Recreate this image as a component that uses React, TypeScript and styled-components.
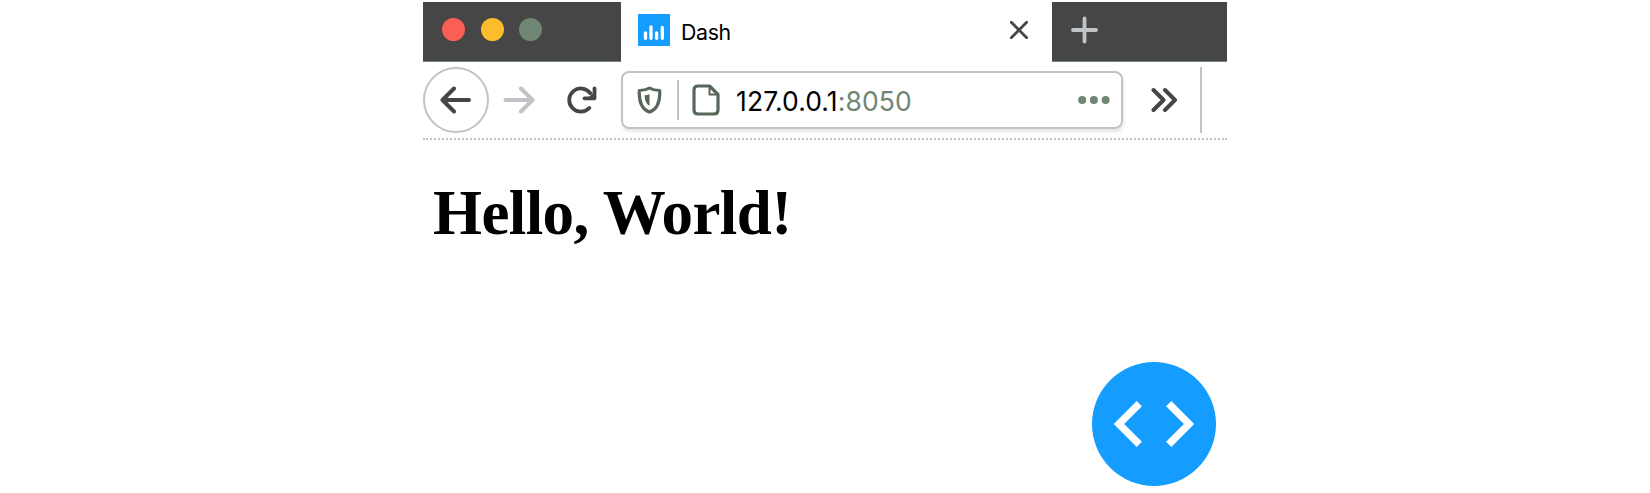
import React from "react";
import styled, { createGlobalStyle } from "styled-components";

const GlobalStyle = createGlobalStyle`
  * { box-sizing: border-box; }
  body { margin: 0; background: #fff; }
`;

const ui = `Inter, "Liberation Sans", sans-serif`;
const dark = "#464646";
const green = "#6f8672";
const grey = "#c0c4c8";
const blue = "#149dff";

const Page = styled.div`
  height: 493px;
  display: flex;
  justify-content: center;
  background: #fff;
`;
const Window = styled.div`
  width: 804px;
  padding-top: 2px;
  display: flex;
  flex-direction: column;
`;
const TabStrip = styled.div`
  height: 60px;
  display: flex;
`;
const StripSide = styled.div<{ $width: number; $pad: number }>`
  width: ${(p) => p.$width}px;
  padding-left: ${(p) => p.$pad}px;
  padding-bottom: 4px;
  display: flex;
  align-items: center;
  gap: 15.5px;
  background: ${dark};
  border-bottom: 1px solid ${green};
`;
const Light = styled.span<{ $color: string }>`
  width: 23px;
  height: 23px;
  border-radius: 50%;
  background: ${(p) => p.$color};
`;
const Tab = styled.div`
  width: 431px;
  padding: 0 24px 4px 17px;
  display: flex;
  align-items: center;
`;
const TabTitle = styled.span`
  flex: 1;
  margin-left: 11px;
  padding-top: 3px;
  font: 400 21.3px/28px ${ui};
  letter-spacing: -0.35px;
  color: #000;
`;
const Toolbar = styled.div`
  height: 78px;
  padding: 5px 0 6px;
  display: flex;
  align-items: center;
  border-bottom: 2px dotted ${grey};
`;
const BackButton = styled.div`
  width: 66px;
  height: 66px;
  border: 2px solid ${grey};
  border-radius: 50%;
  display: flex;
  align-items: center;
  justify-content: center;
`;
const NavIcon = styled.div<{ $left: number }>`
  display: flex;
  margin-left: ${(p) => p.$left}px;
`;
const AddressBar = styled.div`
  width: 502px;
  height: 58px;
  margin-left: 24px;
  padding: 0 11px 0 14px;
  display: flex;
  align-items: center;
  border: 2px solid ${grey};
  border-radius: 8px;
  box-shadow: 1px 3px 3px rgba(120, 125, 130, 0.18);
`;
const Divider = styled.span<{ $height: number; $left: number; $right?: number }>`
  width: 2px;
  height: ${(p) => p.$height}px;
  margin: 0 ${(p) => p.$right ?? 0}px 0 ${(p) => p.$left}px;
  background: ${grey};
`;
const Url = styled.span`
  flex: 1;
  margin-left: 16px;
  padding-top: 2px;
  font: 400 26.5px/36px ${ui};
  letter-spacing: 0.1px;
  color: #000;
`;
const Port = styled.span`
  color: ${green};
`;
const Content = styled.main`
  flex: 1;
  padding: 36px 11px 7px 10px;
  display: flex;
  flex-direction: column;
  justify-content: space-between;
`;
const Heading = styled.h1`
  margin: 0;
  font: 700 63px/74px "Liberation Serif", serif;
  letter-spacing: -0.6px;
  color: #000;
`;
const DebugButton = styled.div`
  align-self: flex-end;
  width: 124px;
  height: 124px;
  border-radius: 50%;
  background: ${blue};
  display: flex;
`;

const Arrow = ({ color, flip }: { color: string; flip?: boolean }) => (
  <svg width="32" height="28" viewBox="0 0 32 28" fill="none" stroke={color} strokeWidth="4" strokeLinecap="round" strokeLinejoin="round">
    <path d={flip ? "M2.5 14H29M18 2.5L29.5 14L18 25.5" : "M29 14H3M14 2.5L2.5 14L14 25.5"} />
  </svg>
);

export default function App() {
  return (
    <Page>
      <GlobalStyle />
      <Window>
        <TabStrip>
          <StripSide $width={198} $pad={19}>
            <Light $color="#f95f53" />
            <Light $color="#fcbc2c" />
            <Light $color={green} />
          </StripSide>
          <Tab>
            <svg width="32" height="32" viewBox="0 0 32 32">
              <rect width="32" height="32" fill={blue} />
              <path d="M7.5 18.8V24.3M13 13V24.3M18.6 18.8V24.3M24.3 13.5V24.3" stroke="#fff" strokeWidth="3.3" strokeLinecap="round" />
            </svg>
            <TabTitle>Dash</TabTitle>
            <svg width="18" height="18" viewBox="0 0 18 18">
              <path d="M1.3 1.3L16.7 16.7M16.7 1.3L1.3 16.7" stroke={dark} strokeWidth="2.8" strokeLinecap="round" />
            </svg>
          </Tab>
          <StripSide $width={175} $pad={19}>
            <svg width="27" height="28" viewBox="0 0 27 28">
              <path d="M2 14H25M13.5 2.5V25.5" stroke={grey} strokeWidth="3.8" strokeLinecap="round" />
            </svg>
          </StripSide>
        </TabStrip>
        <Toolbar>
          <BackButton>
            <Arrow color={dark} />
          </BackButton>
          <NavIcon $left={14}>
            <Arrow color={grey} flip />
          </NavIcon>
          <NavIcon $left={32}>
            <svg width="30" height="30" viewBox="0 0 30 30" fill="none" stroke={dark} strokeWidth="3.8" strokeLinecap="round" strokeLinejoin="round">
              <path d="M22.3 23A11.6 11.6 0 1 1 23.2 8.2" />
              <path d="M27.5 3.5V13.3H17.5" />
              <path d="M21 13L27 7V13Z" fill={dark} stroke="none" />
            </svg>
          </NavIcon>
          <AddressBar>
            <svg width="25" height="28" viewBox="0 0 25 28" fill="none" stroke="#58675a" strokeWidth="3.2" strokeLinejoin="round">
              <path d="M12.5 2C9.5 3.8 6 4.5 2.3 4.5C1.8 15 4 23 12.5 26C21 23 23.2 15 22.7 4.5C19 4.5 15.5 3.8 12.5 2Z" />
              <path d="M12.5 8.2V19.7C9 17.8 7.6 14 7.7 9.2C9.4 9 11 8.8 12.5 8.2Z" fill="#58675a" stroke="none" />
            </svg>
            <Divider $height={40} $left={15} $right={13} />
            <svg width="28" height="32" viewBox="0 0 28 32" fill="none" stroke="#58675a" strokeWidth="3.2" strokeLinejoin="round">
              <path d="M17.5 2H6Q2 2 2 6V26Q2 30 6 30H22Q26 30 26 26V10.5Z" />
              <path d="M17.5 2V10.5H26" strokeWidth="2" />
            </svg>
            <Url>
              127.0.0.1<Port>:8050</Port>
            </Url>
            <svg width="32" height="10" viewBox="0 0 32 10" fill={green}>
              <circle cx="4.2" cy="5" r="4" />
              <circle cx="15.9" cy="5" r="4" />
              <circle cx="27.6" cy="5" r="4" />
            </svg>
          </AddressBar>
          <NavIcon $left={28}>
            <svg width="27" height="26" viewBox="0 0 27 26" fill="none" stroke={dark} strokeWidth="4" strokeLinecap="round" strokeLinejoin="round">
              <path d="M2.5 3L12.5 13L2.5 23M14 3L24 13L14 23" />
            </svg>
          </NavIcon>
          <Divider $height={66} $left={22} />
        </Toolbar>
        <Content>
          <Heading>Hello, World!</Heading>
          <DebugButton>
            <svg width="124" height="124" viewBox="0 0 124 124" fill="none" stroke="#fff" strokeWidth="7.4">
              <path d="M47.3 41.7L27 62L47.3 82.3M76.7 41.7L97 62L76.7 82.3" />
            </svg>
          </DebugButton>
        </Content>
      </Window>
    </Page>
  );
}
